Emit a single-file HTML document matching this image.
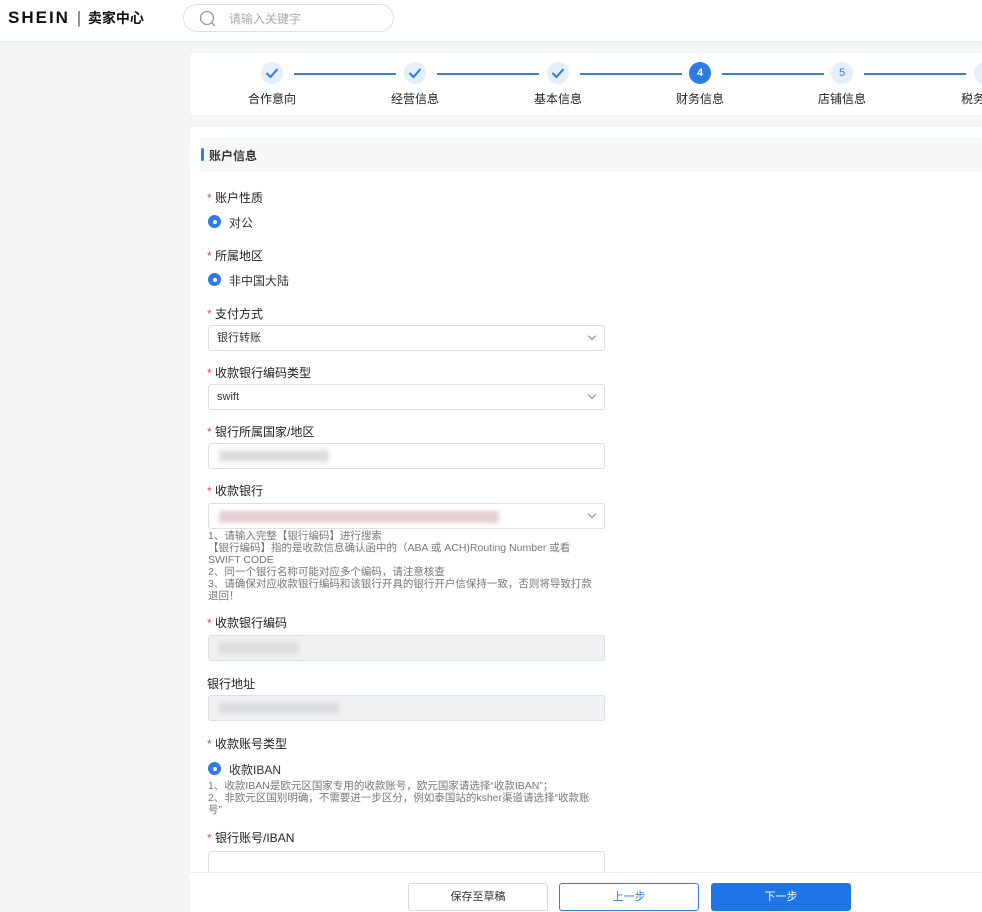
<!DOCTYPE html>
<html><head><meta charset="utf-8"><style>
*{margin:0;padding:0;box-sizing:border-box}
body{width:982px;height:912px;overflow:hidden;background:#f4f5f7;font-family:"Liberation Sans","Noto Sans CJK SC",sans-serif;color:#333;position:relative}
.abs{position:absolute;white-space:nowrap}
.hdr{left:0;top:0;width:982px;height:42px;background:#fff;border-bottom:1px solid #eceef1}
.logo{left:8px;top:8px;font-size:17px;font-weight:bold;letter-spacing:2px;color:#111}
.search{left:183px;top:4px;width:211px;height:28px;border:1px solid #dcdfe4;border-radius:14px}
.card{background:#fff;border-radius:4px}
.circ{width:22px;height:22px;border-radius:50%;background:#e4effb;color:#2d7be5;font-size:11px;text-align:center;line-height:22px}
.circ.on{background:#2d7be5;color:#fff;font-weight:bold}
.circ svg{position:absolute;left:4px;top:5px}
.line{height:2px;background:#3d7fd0}
.slab{font-size:12px;color:#222;top:90px}
.lab{font-size:12px;color:#222;left:207px}
.lab:before{content:"* ";color:#e45;}
.nl:before{content:""}
.inp{left:208px;width:397px;height:26px;border:1px solid #dcdfe4;border-radius:3px;font-size:11px;padding:0 8px;line-height:24px}
.dis{background:#f0f1f3}
.arr{position:absolute;right:9px;top:7px;width:6px;height:6px;border-right:1.5px solid #888;border-bottom:1.5px solid #888;transform:rotate(45deg)}
.radio{left:208px;width:13px;height:13px;border-radius:50%;background:#2d7be5}
.radio:after{content:"";position:absolute;left:4.5px;top:4.5px;width:4px;height:4px;border-radius:50%;background:#fff}
.rt{left:229px;font-size:12px}
.hint{left:208px;font-size:10.5px;color:#777;line-height:12px;width:400px}
.blur{position:absolute;height:12px;background:#ddd;filter:blur(2px)}
.btn{top:883px;width:140px;height:28px;border-radius:3px;font-size:11px;text-align:center;line-height:26px}
</style></head><body>
<div class="abs hdr"></div>
<div class="abs logo">SHEIN <span style="font-weight:normal;color:#666;letter-spacing:0">|</span> <span style="letter-spacing:0;font-size:14px">卖家中心</span></div>
<div class="abs search"><svg class="abs" style="left:15px;top:5px" width="17" height="17" viewBox="0 0 17 17"><circle cx="8" cy="8" r="6.5" fill="none" stroke="#999" stroke-width="1.3"/><path d="M12.6 12.6L16 16" stroke="#999" stroke-width="1.3"/></svg><span class="abs" style="left:45px;top:5px;font-size:12px;color:#aaa">请输入关键字</span></div>

<div class="abs card" style="left:190px;top:53px;width:800px;height:62px"></div>
<div class="abs circ" style="left:261px;top:62px"><svg width="14" height="12" viewBox="0 0 14 12"><path d="M1.5 6L5.5 10L12.5 2" fill="none" stroke="#2d7be5" stroke-width="2"/></svg></div>
<div class="abs line" style="left:294px;top:73px;width:102px"></div>
<div class="abs circ" style="left:404px;top:62px"><svg width="14" height="12" viewBox="0 0 14 12"><path d="M1.5 6L5.5 10L12.5 2" fill="none" stroke="#2d7be5" stroke-width="2"/></svg></div>
<div class="abs line" style="left:437px;top:73px;width:102px"></div>
<div class="abs circ" style="left:547px;top:62px"><svg width="14" height="12" viewBox="0 0 14 12"><path d="M1.5 6L5.5 10L12.5 2" fill="none" stroke="#2d7be5" stroke-width="2"/></svg></div>
<div class="abs line" style="left:580px;top:73px;width:102px"></div>
<div class="abs circ on" style="left:689px;top:62px">4</div>
<div class="abs line" style="left:722px;top:73px;width:102px"></div>
<div class="abs circ" style="left:831px;top:62px">5</div>
<div class="abs line" style="left:864px;top:73px;width:102px"></div>
<div class="abs circ" style="left:974px;top:62px"></div>
<div class="abs slab" style="left:248px">合作意向</div>
<div class="abs slab" style="left:391px">经营信息</div>
<div class="abs slab" style="left:534px">基本信息</div>
<div class="abs slab" style="left:676px">财务信息</div>
<div class="abs slab" style="left:818px">店铺信息</div>
<div class="abs slab" style="left:961px">税务</div>

<div class="abs card" style="left:190px;top:127px;width:800px;height:760px"></div>
<div class="abs" style="left:200px;top:137px;width:790px;height:35px;background:#f7f8fa"></div>
<div class="abs" style="left:201px;top:148px;width:3px;height:13px;background:#2d7be5;border-radius:2px"></div>
<div class="abs" style="left:209px;top:147px;font-size:12px;font-weight:bold">账户信息</div>

<div class="abs lab" style="top:189px">账户性质</div>
<div class="abs radio" style="top:215px"></div><div class="abs rt" style="top:214px">对公</div>
<div class="abs lab" style="top:247px">所属地区</div>
<div class="abs radio" style="top:273px"></div><div class="abs rt" style="top:272px">非中国大陆</div>
<div class="abs lab" style="top:305px">支付方式</div>
<div class="abs inp" style="top:325px">银行转账<i class="arr"></i></div>
<div class="abs lab" style="top:364px">收款银行编码类型</div>
<div class="abs inp" style="top:384px">swift<i class="arr"></i></div>
<div class="abs lab" style="top:423px">银行所属国家/地区</div>
<div class="abs inp" style="top:443px"><div class="blur" style="left:10px;top:6px;width:110px"></div></div>
<div class="abs lab" style="top:482px">收款银行</div>
<div class="abs inp" style="top:503px"><div class="blur" style="left:10px;top:7px;width:280px;background:#e3cfd2"></div><i class="arr"></i></div>
<div class="abs hint" style="top:530px">1、请输入完整【银行编码】进行搜索<br>【银行编码】指的是收款信息确认函中的（ABA 或 ACH)Routing Number 或看<br>SWIFT CODE<br>2、同一个银行名称可能对应多个编码，请注意核查<br>3、请确保对应收款银行编码和该银行开具的银行开户信保持一致，否则将导致打款<br>退回！</div>
<div class="abs lab" style="top:614px">收款银行编码</div>
<div class="abs inp dis" style="top:635px"><div class="blur" style="left:10px;top:6px;width:80px"></div></div>
<div class="abs lab nl" style="top:675px">银行地址</div>
<div class="abs inp dis" style="top:695px"><div class="blur" style="left:10px;top:6px;width:120px"></div></div>
<div class="abs lab" style="top:735px">收款账号类型</div>
<div class="abs radio" style="top:762px"></div><div class="abs rt" style="top:761px">收款IBAN</div>
<div class="abs hint" style="top:780px">1、收款IBAN是欧元区国家专用的收款账号，欧元国家请选择“收款IBAN”；<br>2、非欧元区国别明确，不需要进一步区分，例如泰国站的ksher渠道请选择“收款账<br>号”</div>
<div class="abs lab" style="top:829px">银行账号/IBAN</div>
<div class="abs inp" style="top:851px;height:30px"></div>

<div class="abs" style="left:190px;top:872px;width:792px;height:40px;background:#fff;border-top:1px solid #eee"></div>
<div class="abs btn" style="left:408px;border:1px solid #d6d9de;background:#fff">保存至草稿</div>
<div class="abs btn" style="left:559px;border:1px solid #2d7be5;color:#2d7be5;background:#fff">上一步</div>
<div class="abs btn" style="left:711px;background:#1f74e8;color:#fff;line-height:28px">下一步</div>
</body></html>
